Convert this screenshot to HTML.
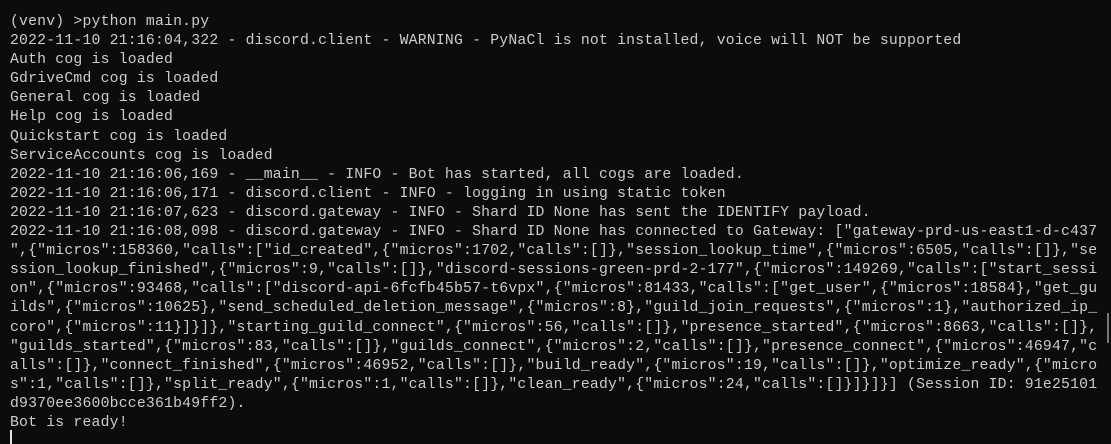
<!DOCTYPE html>
<html><head><style>
html,body{margin:0;padding:0;background:#0c0c0c;width:1111px;height:444px;overflow:hidden}
pre{margin:0;position:absolute;left:10px;top:13px;font-family:"Liberation Mono",monospace;font-size:14.77px;letter-spacing:0.2px;line-height:19.1px;color:#cccccc;white-space:pre}
.cur{position:absolute;left:10px;top:430px;width:2px;height:14px;background:#e0e0e0}
.sb{position:absolute;left:1107px;top:313px;width:2px;height:30px;background:#777}
</style></head><body>
<pre>(venv) &gt;python main.py
2022-11-10 21:16:04,322 - discord.client - WARNING - PyNaCl is not installed, voice will NOT be supported
Auth cog is loaded
GdriveCmd cog is loaded
General cog is loaded
Help cog is loaded
Quickstart cog is loaded
ServiceAccounts cog is loaded
2022-11-10 21:16:06,169 - __main__ - INFO - Bot has started, all cogs are loaded.
2022-11-10 21:16:06,171 - discord.client - INFO - logging in using static token
2022-11-10 21:16:07,623 - discord.gateway - INFO - Shard ID None has sent the IDENTIFY payload.
2022-11-10 21:16:08,098 - discord.gateway - INFO - Shard ID None has connected to Gateway: ["gateway-prd-us-east1-d-c437
",{"micros":158360,"calls":["id_created",{"micros":1702,"calls":[]},"session_lookup_time",{"micros":6505,"calls":[]},"se
ssion_lookup_finished",{"micros":9,"calls":[]},"discord-sessions-green-prd-2-177",{"micros":149269,"calls":["start_sessi
on",{"micros":93468,"calls":["discord-api-6fcfb45b57-t6vpx",{"micros":81433,"calls":["get_user",{"micros":18584},"get_gu
ilds",{"micros":10625},"send_scheduled_deletion_message",{"micros":8},"guild_join_requests",{"micros":1},"authorized_ip_
coro",{"micros":11}]}]},"starting_guild_connect",{"micros":56,"calls":[]},"presence_started",{"micros":8663,"calls":[]},
"guilds_started",{"micros":83,"calls":[]},"guilds_connect",{"micros":2,"calls":[]},"presence_connect",{"micros":46947,"c
alls":[]},"connect_finished",{"micros":46952,"calls":[]},"build_ready",{"micros":19,"calls":[]},"optimize_ready",{"micro
s":1,"calls":[]},"split_ready",{"micros":1,"calls":[]},"clean_ready",{"micros":24,"calls":[]}]}]}] (Session ID: 91e25101
d9370ee3600bcce361b49ff2).
Bot is ready!</pre>
<div class="cur"></div>
<div class="sb"></div>
</body></html>
